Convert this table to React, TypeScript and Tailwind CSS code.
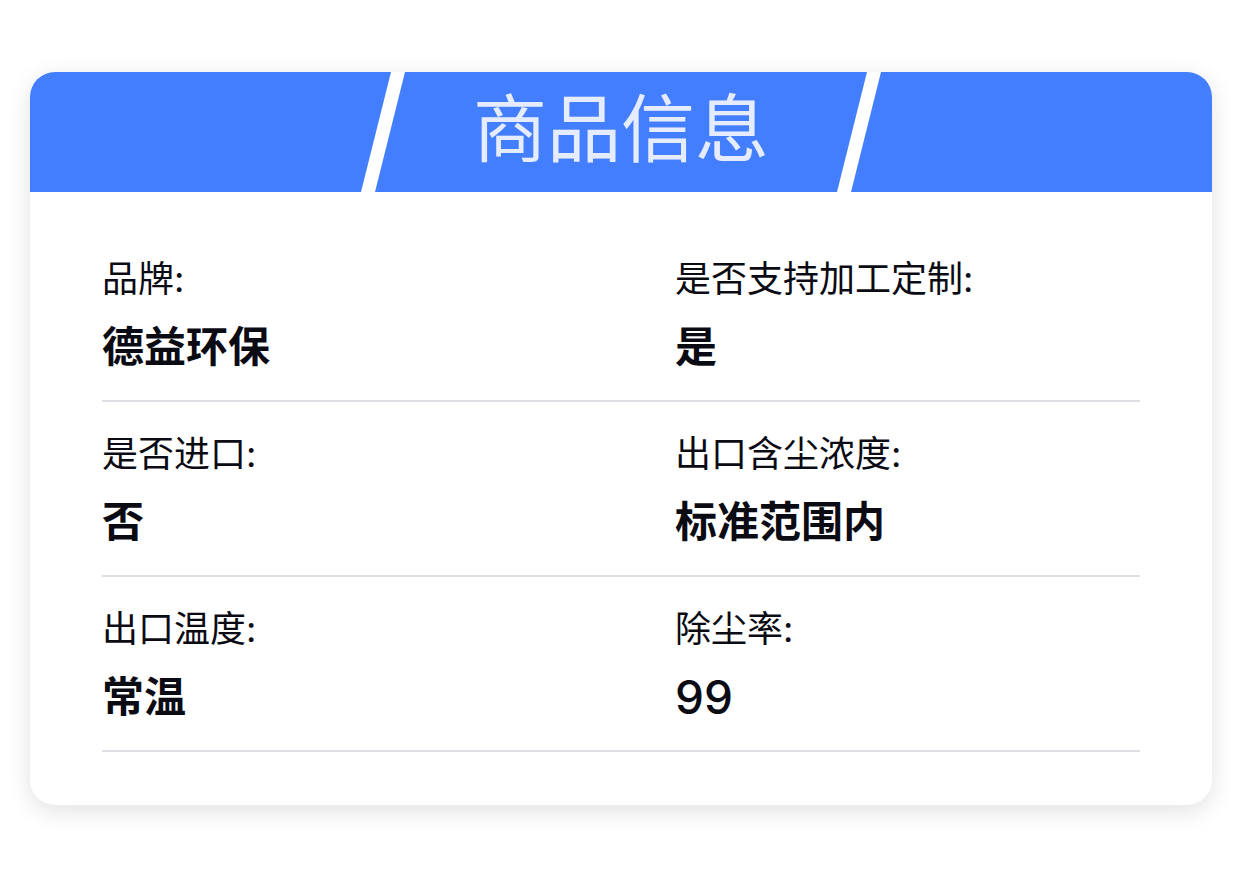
import React from 'react';

const items = [
  { label: '品牌:', value: '德益环保' },
  { label: '是否支持加工定制:', value: '是' },
  { label: '是否进口:', value: '否' },
  { label: '出口含尘浓度:', value: '标准范围内' },
  { label: '出口温度:', value: '常温' },
  { label: '除尘率:', value: '99', num: true },
];

export default function App() {
  return (
    <div
      className="min-h-screen bg-white px-[30px] pt-[72px]"
      style={{ fontFamily: 'Inter, "Noto Sans CJK SC", sans-serif' }}
    >
      <div className="w-[1182px] rounded-[25px] bg-white shadow-[0_6px_24px_rgba(0,0,0,0.12)] overflow-hidden">
        {/* Header */}
        <div className="relative h-[120px] bg-[#437efe] flex items-center justify-center">
          <svg className="absolute inset-0" width="1182" height="120" viewBox="0 0 1182 120">
            <polygon points="361,0 375,0 345,120 331,120" fill="#ffffff" />
            <polygon points="837,0 851,0 821,120 807,120" fill="#ffffff" />
          </svg>
          <h1 className="relative text-[74px] leading-none font-normal text-[#e6ecff] -mt-[7px]">商品信息</h1>
        </div>

        {/* Body */}
        <div className="px-[72px] pt-[35px] pb-[53px]">
          <div className="grid grid-cols-[573px_1fr]">
            {items.map((it) => (
              <div key={it.label} className="pt-[32px] pb-[28px] border-b-2 border-[#dedee3]">
                <div className="text-[36px] leading-[40px] text-[#0b0b14]">{it.label}</div>
                <div
                  className={
                    it.num
                      ? 'mt-[23px] text-[46px] leading-[50px] font-medium text-[#0b0b14]'
                      : 'mt-[23px] text-[42px] leading-[50px] font-bold text-[#0b0b14]'
                  }
                >
                  {it.value}
                </div>
              </div>
            ))}
          </div>
        </div>
      </div>
    </div>
  );
}
